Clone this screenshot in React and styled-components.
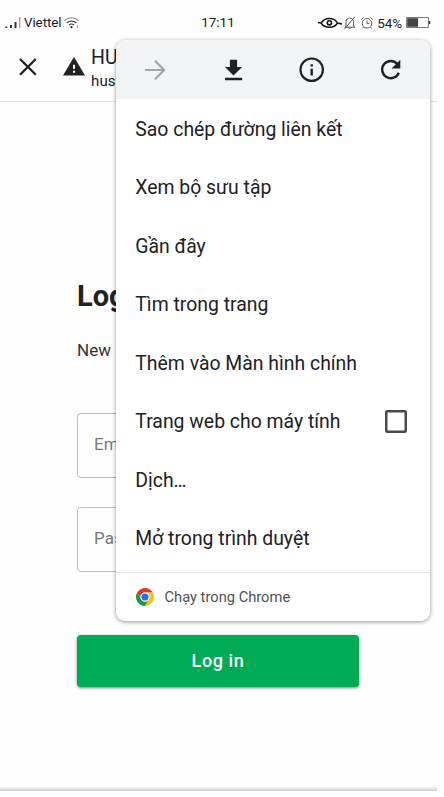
import React from "react";
import styled, { createGlobalStyle } from "styled-components";

const GlobalStyle = createGlobalStyle`
  * { box-sizing: border-box; }
  html, body { margin: 0; background: #ffffff; overflow: hidden; }
  body { font-family: Roboto, "Noto Sans", sans-serif; color: #202124; }
  svg { display: block; flex: none; }
`;

const Screen = styled.div`
  position: relative;
  width: 437px;
  height: 791px;
  background: #fefefe;
  display: flex;
  flex-direction: column;
  overflow: hidden;
`;

const StatusBar = styled.header`
  height: 40px;
  flex: none;
  display: grid;
  grid-template-columns: 1fr auto 1fr;
  align-items: center;
  padding: 5px 6px 0 5px;
  font-size: 13.4px;
  line-height: 16px;
`;

const StatusGroup = styled.div`
  display: flex;
  align-items: center;
  justify-content: ${(p) => p.$justify || "flex-start"};
`;

const Carrier = styled.span`
  margin: 0 3px;
  letter-spacing: -0.08px;
`;

const Clock = styled.span`
  font-size: 13.4px;
`;

const AlertIcons = styled.div`
  display: flex;
  align-items: center;
  gap: 5px;
  margin-left: 1px;
`;

const BatteryLevel = styled.span`
  margin: 0 4px 0 4px;
  font-size: 13.5px;
  letter-spacing: -0.1px;
`;

const TabHeader = styled.div`
  height: 62px;
  flex: none;
  display: flex;
  border-bottom: 1.5px solid #e2e2e2;
  padding-left: 17px;
`;

const HeaderIcon = styled.div`
  padding-top: ${(p) => p.$top}px;
  margin-right: ${(p) => p.$gap}px;
`;

const PageInfo = styled.div`
  display: flex;
  flex-direction: column;
  padding-top: 6px;
`;

const PageTitle = styled.span`
  font-size: 19.5px;
  line-height: 24px;
`;

const PageHost = styled.span`
  font-size: 15px;
  line-height: 20px;
  margin-top: 1px;
  letter-spacing: 0.15px;
`;

const LoginForm = styled.main`
  flex: 1;
  display: flex;
  flex-direction: column;
  padding: 176px 78px 0 77px;
`;

const Heading = styled.h1`
  margin: 0;
  font-size: 29px;
  line-height: 36px;
  font-weight: 700;
`;

const Hint = styled.p`
  margin: 26px 0 53px;
  font-size: 17px;
  line-height: 20px;
  letter-spacing: 0.1px;
  color: #333333;
`;

const Field = styled.div`
  height: 65px;
  margin-bottom: 29px;
  border: 1px solid #bdbdbd;
  border-radius: 4px;
  display: flex;
  align-items: center;
  padding: 0 16px 3px;
  font-size: 17px;
  letter-spacing: 0.2px;
  color: #777777;
`;

const LoginButton = styled.button`
  margin: 34px 0 0;
  height: 52px;
  border: 0;
  border-radius: 4px;
  background: #00ab56;
  box-shadow: 0 1px 3px rgba(0, 0, 0, 0.5);
  color: #ffffff;
  font: 500 18px/24px Roboto, sans-serif;
  letter-spacing: 0.6px;
`;

const ScreenEdge = styled.div`
  height: 5px;
  flex: none;
  background: linear-gradient(#fefefe, #cecece);
`;

const Menu = styled.div`
  position: absolute;
  left: 116px;
  top: 40px;
  width: 314px;
  height: 581px;
  border-radius: 9px;
  background: #ffffff;
  box-shadow: 0 1px 4px rgba(0, 0, 0, 0.42);
  overflow: hidden;
  display: flex;
  flex-direction: column;
`;

const ActionRow = styled.div`
  height: 59px;
  flex: none;
  background: #f1f3f4;
  display: grid;
  grid-template-columns: repeat(4, 1fr);
  place-items: center;
`;

const MenuList = styled.div`
  flex: none;
  height: 474px;
  border-bottom: 1.5px solid #e4e4e4;
  padding-top: 1.4px;
`;

const MenuItem = styled.div`
  height: 58.5px;
  display: flex;
  align-items: center;
  justify-content: space-between;
  padding: 0 23px 0 19.3px;
  font-size: 19.4px;
  line-height: 26px;
  white-space: nowrap;
`;

const Checkbox = styled.span`
  width: 22.5px;
  height: 22.5px;
  margin-top: -1.5px;
  border: 2px solid #47494c;
  border-radius: 2.5px;
  box-shadow: inset 0 0 0 0.5px #47494c;
`;

const MenuFooter = styled.div`
  flex: 1;
  display: flex;
  align-items: center;
  gap: 10.5px;
  padding: 0 0 1px 20px;
  font-size: 14.7px;
  color: #505255;
`;

const SignalIcon = () => (
  <svg width="16" height="12" viewBox="0 0 16 12">
    <path d="M.3 9.5h2V11h-2zM5 8h2v3H5zM9.5 5h2v6h-2z" fill="#333" />
    <path d="M14.7 0v11" stroke="#999" strokeWidth="1.2" />
  </svg>
);

const WifiIcon = () => (
  <svg width="15" height="12" viewBox="0 0 15 12" fill="none" stroke="#555" strokeWidth="1.1">
    <path d="M.6 3.7C4.4-.2 10.6-.2 14.4 3.7" stroke="#888" />
    <path d="M2.8 5.9c2.6-2.6 6.8-2.6 9.4 0M5 8.1c1.4-1.4 3.6-1.4 5 0" stroke="#333" />
    <circle cx="7.5" cy="10.2" r="1.1" fill="#222" stroke="none" />
    <path d="M13.4 8v3" stroke="#aaa" />
  </svg>
);

const EyeIcon = () => (
  <svg width="25" height="12" viewBox="0 0 25 12" fill="none" stroke="#111">
    <path d="M0 5.6 3 6C7-.1 16-.1 19.5 6L24 7M3 6C7 11.7 16 11.7 19.5 6" strokeWidth="1.5" />
    <circle cx="11.4" cy="5.8" r="2.1" strokeWidth="1.6" />
  </svg>
);

const MutedBellIcon = () => (
  <svg width="12" height="14" viewBox="0 0 12 14" fill="none" stroke="#555" strokeWidth="1">
    <path d="M2 10V5.5C2 1 9.5 1 9.5 5.5V10l1.5 1.2H.7L2 10M4.2 11.5c.3 1.3 2.5 1.3 2.8 0M.7 12.8 10.8.8" />
  </svg>
);

const AlarmIcon = () => (
  <svg width="12" height="12" viewBox="0 0 12 12" fill="none" stroke="#666" strokeWidth="1">
    <circle cx="6" cy="6.3" r="4.8" />
    <path d="M6 3.5v3h2.4M.3 2.5 2.6.5M11.7 2.5 9.4.5M2.5 10.1l-1 1.4M9.5 10.1l1 1.4" />
  </svg>
);

const BatteryIcon = () => (
  <svg width="25" height="11" viewBox="0 0 25 11">
    <path d="M.6.5h21.8v10H.6z" fill="none" stroke="#777" strokeWidth="1" />
    <path d="M1.2 1.2h10.9v8.6H1.2z" fill="#444" />
    <path d="M23.5 4v3" stroke="#333" strokeWidth="1.5" />
  </svg>
);

const CloseIcon = () => (
  <svg width="22" height="22" viewBox="0 0 22 22">
    <path d="m3 3 15.8 15.8m0-15.8L3 18.8" stroke="#202124" strokeWidth="2.3" />
  </svg>
);

const WarningIcon = () => (
  <svg width="22" height="19" viewBox="0 0 22 19">
    <path d="M11 0 22 18.5H0z" fill="#202124" />
    <path d="M10 7.8h2v4h-2zM10 13.7h2v2h-2z" fill="#fff" />
  </svg>
);

const ForwardIcon = () => (
  <svg width="22" height="22" viewBox="0 0 22 22" fill="none" stroke="#a2a4a6" strokeWidth="2.1">
    <path d="M1 11h18.5M11 1.8l9.2 9.2-9.2 9.2" />
  </svg>
);

const DownloadIcon = () => (
  <svg width="18" height="22" viewBox="0 0 18 22" fill="#202124">
    <path d="M4.9.7h7.2V8h5L8.5 16.4 0 8h4.9zM0 18.8h17.2v2.5H0z" />
  </svg>
);

const InfoIcon = () => (
  <svg width="26" height="26" viewBox="0 0 26 26">
    <circle cx="12.7" cy="12.7" r="11.2" fill="none" stroke="#202124" strokeWidth="2.2" />
    <path d="M11.5 7.2h2.4v2.4h-2.4zM11.5 11.8h2.4v6.7h-2.4z" fill="#202124" />
  </svg>
);

const ReloadIcon = () => (
  <svg width="22" height="22" viewBox="0 0 22 22">
    <path d="M17.3 5A8.6 8.6 0 1 0 18.8 13.7" fill="none" stroke="#202124" strokeWidth="2.4" />
    <path d="M20.3.8v8.6h-8.7z" fill="#202124" />
  </svg>
);

const ChromeIcon = () => (
  <svg width="18" height="18" viewBox="0 0 48 48">
    <circle cx="24" cy="24" r="24" fill="#fff" />
    <path d="M3.22 12A24 24 0 0 1 44.78 12H24a12 12 0 0 0-10.39 18z" fill="#df382c" />
    <path d="M44.78 12A24 24 0 0 1 24 48l10.39-18A12 12 0 0 0 24 12z" fill="#fbc116" />
    <path d="M24 48A24 24 0 0 1 3.22 12l10.39 18a12 12 0 0 0 20.78 0z" fill="#239447" />
    <circle cx="24" cy="24" r="12" fill="#fff" />
    <circle cx="24" cy="24" r="9.5" fill="#1a73e8" />
  </svg>
);

const menuItems = [
  { label: "Sao chép đường liên kết" },
  { label: "Xem bộ sưu tập" },
  { label: "Gần đây" },
  { label: "Tìm trong trang" },
  { label: "Thêm vào Màn hình chính" },
  { label: "Trang web cho máy tính", checkbox: true },
  { label: "Dịch…" },
  { label: "Mở trong trình duyệt" },
];

export default function App() {
  return (
    <>
      <GlobalStyle />
      <Screen>
        <StatusBar>
          <StatusGroup>
            <SignalIcon />
            <Carrier>Viettel</Carrier>
            <WifiIcon />
          </StatusGroup>
          <Clock>17:11</Clock>
          <StatusGroup $justify="flex-end">
            <EyeIcon />
            <AlertIcons>
              <MutedBellIcon />
              <AlarmIcon />
            </AlertIcons>
            <BatteryLevel>54%</BatteryLevel>
            <BatteryIcon />
          </StatusGroup>
        </StatusBar>
        <TabHeader>
          <HeaderIcon $top={16} $gap={24}>
            <CloseIcon />
          </HeaderIcon>
          <HeaderIcon $top={17} $gap={6}>
            <WarningIcon />
          </HeaderIcon>
          <PageInfo>
            <PageTitle>HU</PageTitle>
            <PageHost>hust</PageHost>
          </PageInfo>
        </TabHeader>
        <LoginForm>
          <Heading>Log</Heading>
          <Hint>New</Hint>
          <Field>Em</Field>
          <Field>Pas</Field>
          <LoginButton>Log in</LoginButton>
        </LoginForm>
        <ScreenEdge />
        <Menu>
          <ActionRow>
            <ForwardIcon />
            <DownloadIcon />
            <InfoIcon />
            <ReloadIcon />
          </ActionRow>
          <MenuList>
            {menuItems.map((item) => (
              <MenuItem key={item.label}>
                {item.label}
                {item.checkbox && <Checkbox />}
              </MenuItem>
            ))}
          </MenuList>
          <MenuFooter>
            <ChromeIcon />
            Chạy trong Chrome
          </MenuFooter>
        </Menu>
      </Screen>
    </>
  );
}
